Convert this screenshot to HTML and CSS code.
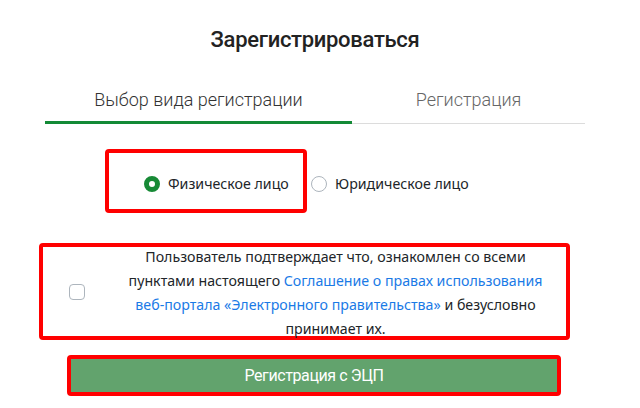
FILE: index.html
```html
<!DOCTYPE html>
<html>
<head>
    <meta charset="utf-8">
    <link rel="stylesheet" href="styles.css">
</head>
<body>
    <div class="register">
        <h1 class="title">Зарегистрироваться</h1>

        <div class="tabs">
            <div class="tab active">Выбор вида регистрации</div>
            <div class="tab">Регистрация</div>
        </div>

        <div class="types">
            <label class="type marked">
                <span class="radio checked"></span>
                Физическое лицо
            </label>
            <label class="type">
                <span class="radio"></span>
                Юридическое лицо
            </label>
        </div>

        <div class="agree marked">
            <span class="check"></span>
            <p class="agree-text">
                Пользователь подтверждает что, ознакомлен со всеми пунктами настоящего
                <a href="#">Соглашение о правах использования веб-портала «Электронного правительства»</a>
                и безусловно принимает их.
            </p>
        </div>

        <button class="submit marked">Регистрация с ЭЦП</button>
    </div>
</body>
</html>
```

FILE: styles.css
```css
body {
    margin: 0;
    background: #fff;
    font-family: "Noto Sans", "Open Sans", sans-serif;
    color: #212529;
}

.register {
    width: 540px;
    margin-left: 45px;
}

.marked {
    border: 4px solid #ff0000;
    border-radius: 4px;
    box-sizing: border-box;
}

.title {
    margin: 25px 0 0;
    font-family: Roboto, sans-serif;
    font-size: 22px;
    font-weight: 500;
    line-height: 30px;
    text-align: center;
    color: #222;
    letter-spacing: -0.3px;
}

.tabs {
    display: flex;
    margin-top: 25px;
    box-shadow: inset 0 -1px 0 #dcdcdc;
}

.tab {
    padding: 8px 0 12px;
    font-family: Roboto, sans-serif;
    font-size: 18px;
    font-weight: 300;
    line-height: 24px;
    text-align: center;
    color: #666;
}

.tab.active {
    width: 307px;
    padding-bottom: 9px;
    border-bottom: 3px solid #138a36;
    color: #333;
}

.tab + .tab {
    flex: 1;
}

.types {
    display: flex;
    align-items: center;
    margin: 25px 0 0 60px;
}

.type {
    display: flex;
    align-items: center;
    gap: 8px;
    font-size: 14.2px;
    line-height: 22px;
}

.type.marked {
    width: 202px;
    height: 64px;
    padding: 20px 0 0 35px;
    align-items: flex-start;
}

.type + .type {
    margin-left: 4px;
    padding-top: 6px;
}

.radio {
    width: 16px;
    height: 16px;
    border: 1px solid #adb5bd;
    border-radius: 50%;
    box-sizing: border-box;
    flex: none;
}

.type.marked .radio {
    margin-top: 3px;
}

.radio.checked {
    border: 5px solid #178a36;
    background: #fff;
}

.agree {
    display: flex;
    align-items: center;
    width: 531px;
    height: 97px;
    margin: 30px 0 0 -6px;
}

.check {
    width: 16px;
    height: 16px;
    margin-left: 26px;
    border: 1px solid #adb5bd;
    border-radius: 4px;
    box-sizing: border-box;
    flex: none;
}

.agree-text {
    width: 425px;
    margin: 2px 0 0 38px;
    font-size: 14.2px;
    line-height: 24px;
    text-align: center;
}

.agree-text a {
    color: #1a7ae6;
    text-decoration: none;
}

.submit {
    display: block;
    width: 494px;
    height: 41px;
    margin: 15px 0 0 22px;
    background: #62a36d;
    color: #fff;
    font-family: Roboto, sans-serif;
    font-size: 16px;
    font-weight: 400;
    letter-spacing: -0.4px;
    cursor: pointer;
}
```
